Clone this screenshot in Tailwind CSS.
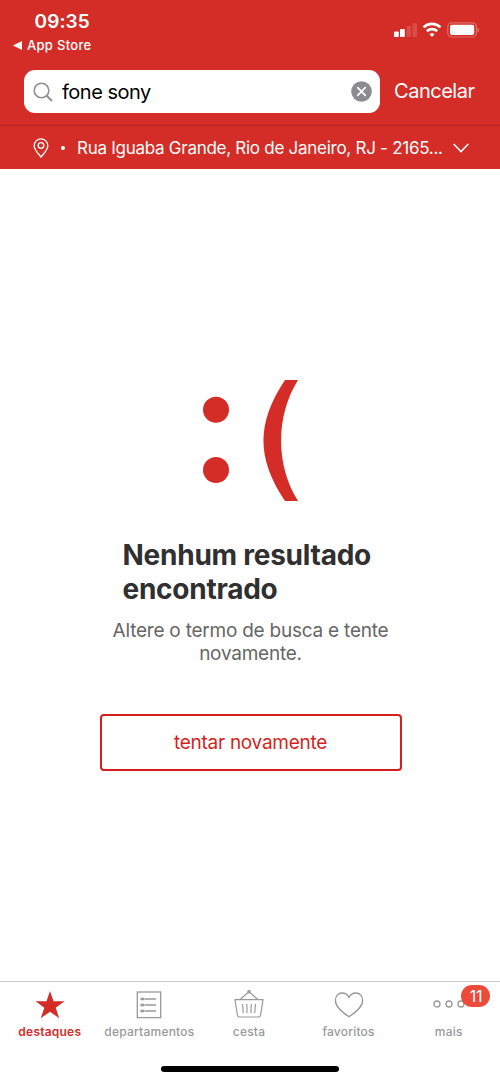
<!DOCTYPE html>
<html lang="pt-BR">
<head>
<meta charset="utf-8">
<title>Busca</title>
<script src="https://cdn.jsdelivr.net/npm/@tailwindcss/browser@4"></script>
</head>
<body class="bg-white">
<div class="flex h-[1082px] w-[500px] flex-col overflow-hidden bg-white font-[Inter,'Liberation_Sans',sans-serif]">
  <header class="h-[169px] shrink-0 bg-[#d42d27] text-white">
    <div class="flex h-[70px] justify-between">
      <div class="pt-[10px]">
        <div class="pl-[34.500px] text-[19px] leading-6 font-semibold whitespace-nowrap tracking-[0.1px]">09:35</div>
        <div class="flex h-[22px] items-center gap-[5px] pl-[13px]">
          <svg class="h-[9px] w-[9px]" viewBox="0 0 9 9" fill="currentColor"><path d="M0 4.500 9 0v9z"/></svg>
          <span class="text-[13px] leading-5 font-medium whitespace-nowrap tracking-[0.3px]">App Store</span>
        </div>
      </div>
      <svg class="mt-5 mr-[15px] h-5 w-[92px]" viewBox="393 20 92 20" fill="#fff">
        <rect x="394" y="31.500" width="4.800" height="5.500" rx="1"/><rect x="400" y="29" width="4.800" height="8" rx="1"/>
        <g fill-opacity=".15"><rect x="406.500" y="26" width="4.500" height="11" rx="1"/><rect x="412.500" y="23" width="4.500" height="14" rx="1"/></g>
        <g fill="none" stroke="#fff" stroke-width="2.700"><path d="M423.500 27.400a12.200 12.200 0 0 1 17 0"/><path d="M426.800 31.200a7.600 7.600 0 0 1 10.400 0"/></g>
        <path d="m432 37 -2.600-2.700a3.900 3.900 0 0 1 5.200 0z"/>
        <rect x="447.800" y="22.800" width="28.600" height="14.200" rx="4" fill="none" stroke="#fff" stroke-opacity=".3" stroke-width="1.200"/>
        <rect x="450" y="24.800" width="24.200" height="10.200" rx="2"/>
        <path d="M477.500 27.800q1.500.7 1.500 2.200t-1.500 2.200z" fill-opacity=".4"/>
      </svg>
    </div>
    <div class="flex h-[43px] items-center pl-6">
      <div class="flex h-[43px] w-[356px] items-center rounded-[11px] bg-white pr-2 pl-[9px] text-black">
        <svg class="h-5 w-5" viewBox="0 0 20 20" fill="none" stroke="#8e8e93" stroke-width="1.600"><circle cx="8.500" cy="8.500" r="7.300"/><path d="m13.700 13.700 5.300 5.300" stroke-width="2"/></svg>
        <span class="grow pl-[9px] text-[20px] leading-6 whitespace-nowrap tracking-[-0.500px]">fone sony</span>
        <svg class="h-[21px] w-[21px]" viewBox="0 0 21 21"><circle cx="10.500" cy="10.500" r="10.300" fill="#8b8b90"/><path d="m6.700 6.700 7.600 7.600m0-7.600-7.600 7.600" stroke="#fff" stroke-width="1.700" stroke-linecap="round"/></svg>
      </div>
      <span class="pb-[2px] pl-[14px] text-[20px] leading-6 whitespace-nowrap tracking-[-0.480px]">Cancelar</span>
    </div>
    <div class="mt-3 flex h-[44px] items-center border-t border-[#ae2620] pl-[33px]">
      <svg class="h-5 w-4" viewBox="0 0 16 20" fill="none" stroke="#fff" stroke-width="1.300"><path d="M8 19C5 15.300 1.200 11.500 1.200 7.700a6.800 6.800 0 0 1 13.600 0C14.800 11.500 11 15.300 8 19z"/><circle cx="8" cy="7.500" r="2.800"/></svg>
      <span class="ml-3 h-1 w-1 rounded-full bg-white"></span>
      <span class="ml-[12px] w-[367px] text-[17px] leading-6 whitespace-nowrap tracking-[-0.270px]">Rua Iguaba Grande, Rio de Janeiro, RJ - 2165...</span>
      <svg class="ml-[9px] h-[10px] w-4" viewBox="0 0 16 10" fill="none" stroke="#fff" stroke-width="1.500"><path d="m.7 1 7.300 7.600L15.300 1"/></svg>
    </div>
  </header>
  <main class="flex grow flex-col items-center pt-[211px] pl-[1px]">
    <svg class="ml-[1px] h-[121px] w-[96px] shrink-0" viewBox="0 0 96 121" fill="#d42d27"><circle cx="13" cy="29.700" r="13"/><circle cx="13" cy="90" r="13"/><path d="M82 0H95C72.500 36 72.500 85 95 121H82C53.300 78 53.300 43 82 0z"/></svg>
    <h1 class="mt-[37px] w-[256px] text-[28px] leading-[34px] font-bold tracking-[-0.250px] whitespace-nowrap text-[#303030]">Nenhum resultado<br>encontrado</h1>
    <p class="mt-[13px] text-center text-[19px] leading-[23px] tracking-[-0.230px] whitespace-nowrap text-[#666]">Altere o termo de busca e tente<br>novamente.</p>
    <button class="mt-[49px] h-[57px] w-[302px] rounded-[4px] border-2 border-[#d61f1c] text-[19px] leading-6 tracking-[-0.270px] whitespace-nowrap text-[#d61f1c]">tentar novamente</button>
  </main>
  <footer class="h-[101px] shrink-0 border-t border-[#c9c9c9] text-[12px] leading-4 font-medium tracking-[0.220px] text-[#999]">
    <nav class="grid h-[87px] w-[498px] grid-cols-5 text-center">
      <div class="flex flex-col items-center pt-[7px] font-semibold text-[#d42d27]">
        <svg class="h-8 w-8" viewBox="0 0 32 32" fill="currentColor"><path d="m16 2 3.500 10.300H30.500L21.700 18.700 25.200 29.200 16 22.800 6.800 29.200 10.300 18.700 1.500 12.300H12.500z"/></svg>
        <span class="mt-[3px]">destaques</span>
      </div>
      <div class="flex flex-col items-center pt-[7px]">
        <svg class="h-8 w-8" viewBox="0 0 32 32" fill="none" stroke="currentColor" stroke-width="1.300"><rect x="4.300" y="3" width="23.400" height="25.600"/><path d="M12 10h11M12 16h11M12 22h11"/><path d="M7.500 10h4M7.500 16h4M7.500 22h4" stroke-width="2.600"/></svg>
        <span class="mt-[3px]">departamentos</span>
      </div>
      <div class="flex flex-col items-center pt-[7px]">
        <svg class="h-8 w-8" viewBox="0 0 32 32" fill="none" stroke="currentColor" stroke-width="1.200"><path d="M2 10.600h28l-2.400 15.400q-.3 2-2.200 2H6.600q-1.900 0-2.200-2zM7.500 10.300 15 3.500M24.500 10.300 17 3.500M9.500 15l.8 9M13.800 15l.2 9M18.200 15l-.2 9M22.500 15l-.8 9"/><circle cx="16" cy="2.800" r="1.200" fill="currentColor"/></svg>
        <span class="mt-[3px]">cesta</span>
      </div>
      <div class="flex flex-col items-center pt-[7px]">
        <svg class="h-8 w-8" viewBox="0 0 32 32" fill="none" stroke="currentColor" stroke-width="1.300"><path d="M16 8.500C14.500 5.500 12 4 9.200 4 5 4 2.400 7.300 2.400 11.500 2.400 18 9 23 16 27.800 23 23 29.600 18 29.600 11.500 29.600 7.300 27 4 22.800 4 20 4 17.500 5.500 16 8.500z"/></svg>
        <span class="mt-[3px]">favoritos</span>
      </div>
      <div class="relative flex flex-col items-center pt-[7px] pl-[1px]">
        <svg class="h-8 w-8" viewBox="0 0 32 32" fill="none" stroke="currentColor" stroke-width="1.300"><circle cx="4" cy="15" r="3"/><circle cx="16" cy="15" r="3"/><circle cx="28" cy="15" r="3"/></svg>
        <span class="mt-[3px]">mais</span>
        <span class="absolute top-[3px] left-[63px] h-[22px] w-[29px] rounded-full bg-[#ec4b3c] text-[16px] leading-[22px] font-normal tracking-[-0.3px] text-white">11</span>
      </div>
    </nav>
    <div class="mx-auto -mt-[3px] h-[6px] w-[178px] rounded-full bg-black"></div>
  </footer>
</div>
</body>
</html>
